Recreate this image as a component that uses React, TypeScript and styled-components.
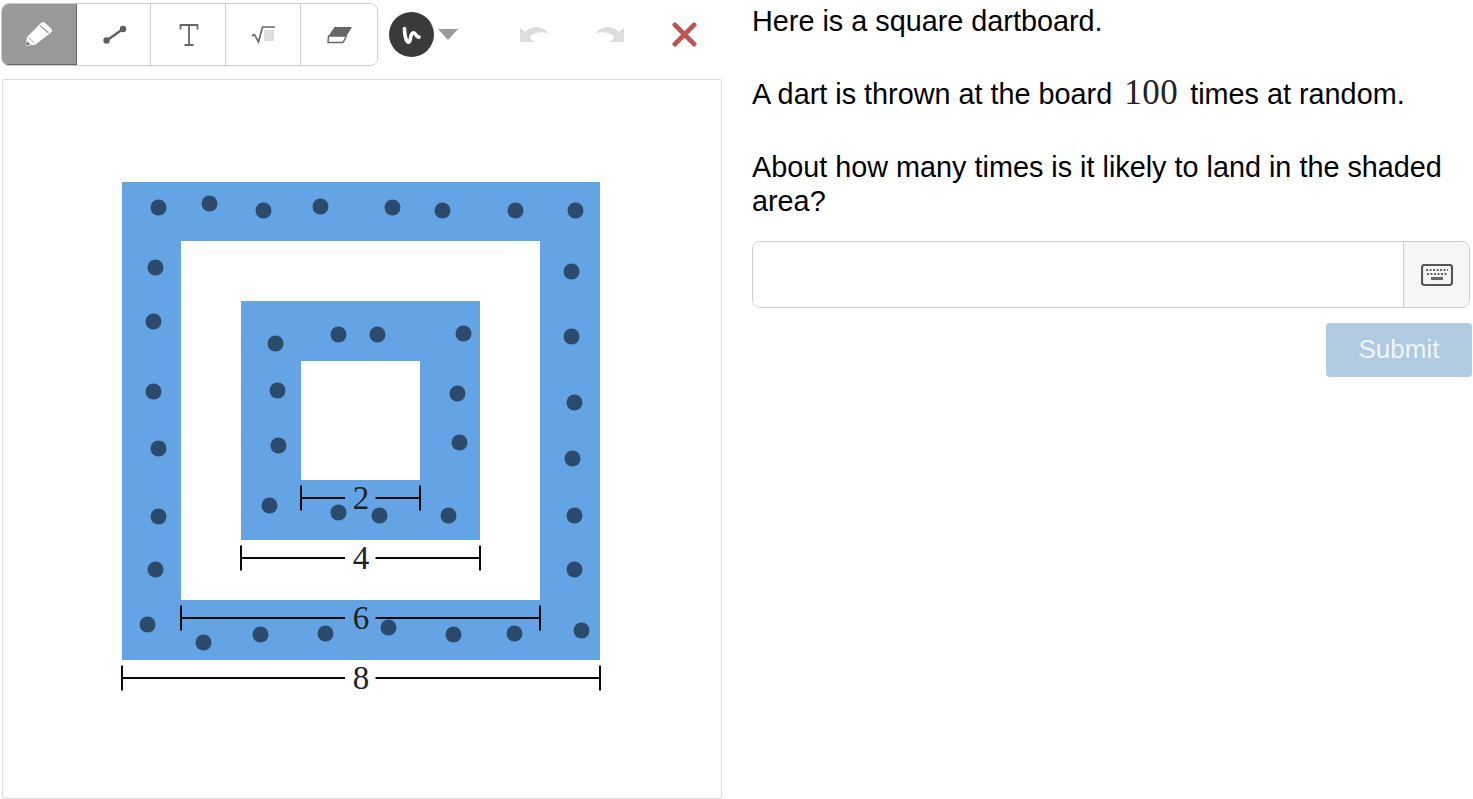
import React from "react";
import styled, { createGlobalStyle } from "styled-components";

const Global = createGlobalStyle`
  html, body { margin: 0; padding: 0; background: #fff; }
  body { font-family: "Liberation Sans", Arial, sans-serif; color: #000; overflow: hidden; }
`;

const Page = styled.div`
  display: flex;
  width: 1473px;
  height: 799px;
  overflow: hidden;
`;

const LeftColumn = styled.div`
  width: 720px;
  margin-left: 2px;
  padding-top: 3px;
  display: flex;
  flex-direction: column;
  flex: none;
`;

const ToolRow = styled.div`
  display: flex;
  align-items: center;
  height: 63px;
  margin-left: -1px;
`;

const ToolGroup = styled.div`
  display: flex;
  width: 377px;
  height: 63px;
  box-sizing: border-box;
  border: 1px solid #ccc;
  border-radius: 8px;
  overflow: hidden;
  flex: none;
`;

const ToolButton = styled.div<{ $active?: boolean; $w: number }>`
  width: ${(p) => p.$w}px;
  flex: none;
  box-sizing: border-box;
  display: flex;
  align-items: center;
  justify-content: center;
  padding-left: ${(p) => (p.$active ? 0 : 2)}px;
  background: ${(p) => (p.$active ? "#999" : "#fff")};
  border-right: 1px solid ${(p) => (p.$active ? "#666" : "#ccc")};
  border-bottom: ${(p) => (p.$active ? "1px solid #666" : "0")};
  &:last-child { border-right: 0; }
`;

const ColorCircle = styled.div`
  width: 45px;
  height: 45px;
  border-radius: 50%;
  background: #3a3a3a;
  margin-left: 11px;
  display: flex;
  align-items: center;
  justify-content: center;
  flex: none;
`;

const Caret = styled.div`
  width: 0;
  height: 0;
  margin-left: 4px;
  margin-top: -1px;
  border-left: 10px solid transparent;
  border-right: 10px solid transparent;
  border-top: 11px solid #999;
  flex: none;
`;

const HistoryIcon = styled.svg<{ $ml: number }>`
  margin-left: ${(p) => p.$ml}px;
  flex: none;
`;

const Canvas = styled.div`
  margin-top: 13px;
  width: 720px;
  height: 720px;
  box-sizing: border-box;
  border: 1px solid #ddd;
  border-radius: 2px;
  background: #fff;
  flex: none;
`;

const RightColumn = styled.div`
  margin-left: 30px;
  padding-top: 4px;
  width: 721px;
  flex: none;
  display: flex;
  flex-direction: column;
`;

const Paragraph = styled.p`
  margin: 0 0 39px;
  font-size: 28.8px;
  line-height: 34px;
  width: 700px;
`;

const MathNumber = styled.span`
  font-family: "Liberation Serif", "DejaVu Serif", serif;
  font-size: 35px;
  letter-spacing: 0.5px;
  color: #222;
  margin: 0 12px;
  line-height: 0;
`;

const InputRow = styled.div`
  margin-top: -16px;
  width: 718px;
  height: 67px;
  box-sizing: border-box;
  display: flex;
  border: 1px solid #ccc;
  border-radius: 8px;
  overflow: hidden;
`;

const InputArea = styled.div`
  flex: 1;
  background: #fff;
`;

const KeypadButton = styled.div`
  width: 66px;
  flex: none;
  box-sizing: border-box;
  border-left: 1px solid #ccc;
  background: #f5f5f5;
  display: flex;
  align-items: center;
  justify-content: center;
`;

const SubmitRow = styled.div`
  display: flex;
  justify-content: flex-end;
  margin-top: 15px;
  width: 720px;
`;

const SubmitButton = styled.div`
  width: 146px;
  height: 54px;
  box-sizing: border-box;
  padding-bottom: 2px;
  border-radius: 4px;
  background: #b0cae2;
  color: #eef5fb;
  font-size: 26px;
  display: flex;
  align-items: center;
  justify-content: center;
`;

const outerDots: [number, number][] = [
  [158, 207], [209, 203], [263, 210], [320, 206], [392, 207], [442, 210], [515, 210], [575, 210],
  [155, 267], [153, 321], [153, 391], [158, 448], [158, 516], [155, 569],
  [571, 271], [571, 336], [574, 402], [572, 458], [574, 515], [574, 569],
  [147, 624], [203, 642], [260, 634], [325, 633], [388, 627], [453, 634], [514, 633], [581, 630],
];
const innerDots: [number, number][] = [
  [275, 343], [338, 334], [377, 334], [463, 333], [277, 390], [457, 393], [278, 445], [459, 442],
  [269, 505], [338, 512], [379, 515], [448, 515],
];

const dims = [
  { x1: 301, x2: 420, y: 498, label: "2" },
  { x1: 241, x2: 480, y: 558, label: "4" },
  { x1: 181, x2: 540, y: 618, label: "6" },
  { x1: 122, x2: 600, y: 678, label: "8" },
];

const Dimension = ({ x1, x2, y, label }: { x1: number; x2: number; y: number; label: string }) => (
  <g stroke="#0a0a0a" strokeWidth={2} fill="none">
    <path d={`M${x1} ${y - 12.5}V${y + 12.5}M${x2} ${y - 12.5}V${y + 12.5}M${x1} ${y}H345M375.5 ${y}H${x2}`} />
    <text
      x={361}
      y={y + 11}
      textAnchor="middle"
      stroke="none"
      fill="#222"
      fontFamily="'Liberation Serif', serif"
      fontSize={33}
    >
      {label}
    </text>
  </g>
);

const Dartboard = () => (
  <svg width={718} height={718} viewBox="3 80 718 718" style={{ display: "block" }}>
    <rect x={122} y={182} width={478} height={478} fill="#65a4e4" />
    <rect x={181} y={241} width={359} height={359} fill="#fff" />
    <rect x={241} y={301} width={239} height={239} fill="#65a4e4" />
    <rect x={301} y={361} width={119} height={119} fill="#fff" />
    {[...outerDots, ...innerDots].map(([cx, cy], i) => (
      <circle key={i} cx={cx + 0.5} cy={cy + 0.5} r={8} fill="#2b4a6c" />
    ))}
    {dims.map((d) => (
      <Dimension key={d.label} {...d} />
    ))}
  </svg>
);

const PencilIcon = () => (
  <svg width={30} height={28} viewBox="25 20 30 28">
    <path
      d="M27 45.5 L28.5 37 L42.5 23 Q44 22 45.5 23 L52 29 Q53 30.5 52 32 L36.5 44 Z"
      fill="#fff"
      stroke="#fff"
      strokeLinejoin="round"
    />
    <path d="M41 25.5 L49.5 33" stroke="#999" strokeWidth={1.2} />
    <path d="M29.5 37.5 L35.5 43" stroke="#aaa" strokeWidth={1} />
    <path d="M27 45.5 L27.8 41 L31.5 44.5 Z" fill="#777" />
  </svg>
);

const LineIcon = () => (
  <svg width={26} height={22} viewBox="0 0 26 22">
    <path d="M4 17 L21 5" stroke="#5e5e5e" strokeWidth={2.4} />
    <circle cx={4.5} cy={16.5} r={3.2} fill="#5e5e5e" />
    <circle cx={21} cy={5} r={3.2} fill="#5e5e5e" />
  </svg>
);

const TextIcon = () => (
  <svg width={20} height={24} viewBox="0 0 20 24" fill="none" stroke="#666" strokeWidth={1.8}>
    <path d="M1.5 6.5 V2 H18.5 V6.5 M10 2 V22 M5.5 22 H14.5" />
  </svg>
);

const SqrtIcon = () => (
  <svg width={26} height={20} viewBox="0 0 26 20">
    <rect x={13} y={5} width={10} height={11} fill="#ddd" />
    <path d="M1 11 L3.5 9.5 L7.5 17 L11.5 2 H24" fill="none" stroke="#666" strokeWidth={1.6} />
  </svg>
);

const EraserIcon = () => (
  <svg width={26} height={18} viewBox="0 0 26 18">
    <path d="M7.5 1 H25 L19.5 10 H1.5 Z" fill="#666" />
    <path d="M1.5 10 H19.5 L16 16.5 H1 Z" fill="#fff" stroke="#666" strokeWidth={1.5} strokeLinejoin="round" />
  </svg>
);

const InkIcon = () => (
  <svg width={20} height={20} viewBox="401 24 20 20" fill="none" stroke="#fff" strokeWidth={3.6} strokeLinecap="round" strokeLinejoin="round">
    <path d="M403.5 27.5 C403.5 33 405 42 408 41 C410 40 409 33 412 32 C415 31 415 37 418 36" />
  </svg>
);

const UndoIcon = () => (
  <path fill="#ddd" d="M0 3 L0 17 L14 17 L9.5 12 C15 7 22 6 29 9 C23 1 13 -1 5 7 Z" />
);

const KeyboardIcon = () => (
  <svg width={32} height={22} viewBox="0 0 32 22" fill="none">
    <rect x={1} y={1} width={30} height={20} rx={2.5} stroke="#555" strokeWidth={2.2} />
    <path d="M5 6 H27 M6 10 H26" stroke="#666" strokeWidth={2} strokeDasharray="2 1.5" />
    <path d="M10 14.5 H22" stroke="#666" strokeWidth={3} />
  </svg>
);

export default function App() {
  return (
    <Page>
      <Global />
      <LeftColumn>
        <ToolRow>
          <ToolGroup>
            <ToolButton $active $w={75}><PencilIcon /></ToolButton>
            <ToolButton $w={74}><LineIcon /></ToolButton>
            <ToolButton $w={75}><TextIcon /></ToolButton>
            <ToolButton $w={75}><SqrtIcon /></ToolButton>
            <ToolButton $w={76}><EraserIcon /></ToolButton>
          </ToolGroup>
          <ColorCircle><InkIcon /></ColorCircle>
          <Caret />
          <HistoryIcon $ml={62} width={30} height={19} viewBox="0 0 30 19"><UndoIcon /></HistoryIcon>
          <HistoryIcon $ml={44} width={30} height={19} viewBox="0 0 30 19">
            <g transform="translate(30 0) scale(-1 1)"><UndoIcon /></g>
          </HistoryIcon>
          <HistoryIcon $ml={48} width={25} height={25} viewBox="0 0 26 26">
            <path d="M3 3 L23 23 M23 3 L3 23" stroke="#bc5555" strokeWidth={5} strokeLinecap="round" />
          </HistoryIcon>
        </ToolRow>
        <Canvas><Dartboard /></Canvas>
      </LeftColumn>
      <RightColumn>
        <Paragraph>Here is a square dartboard.</Paragraph>
        <Paragraph>A dart is thrown at the board<MathNumber>100</MathNumber>times at random.</Paragraph>
        <Paragraph>About how many times is it likely to land in the shaded area?</Paragraph>
        <InputRow>
          <InputArea />
          <KeypadButton><KeyboardIcon /></KeypadButton>
        </InputRow>
        <SubmitRow><SubmitButton>Submit</SubmitButton></SubmitRow>
      </RightColumn>
    </Page>
  );
}
